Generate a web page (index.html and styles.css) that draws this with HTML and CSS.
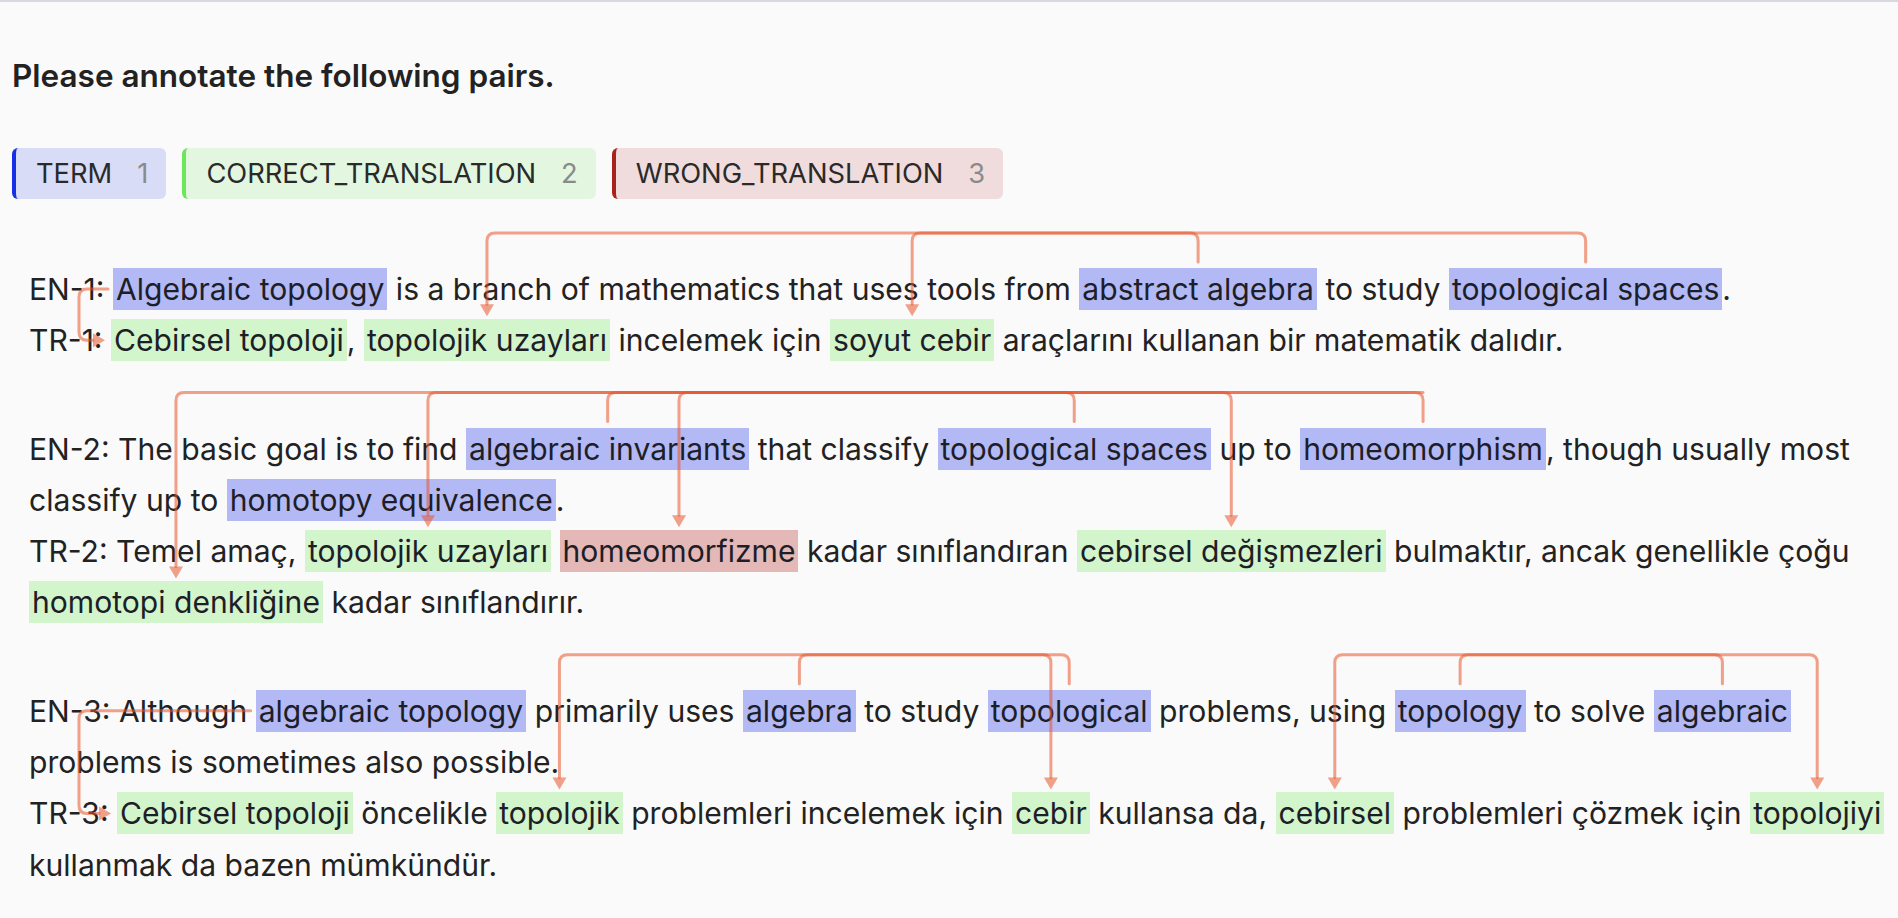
FILE: index.html
```html
<!DOCTYPE html>
<html lang="en">
<head>
<meta charset="utf-8">
<title>Annotate pairs</title>
<link rel="stylesheet" href="styles.css">
</head>
<body>
<main class="page">
  <h1 class="title">Please annotate the following pairs.</h1>
  <div class="labels">
    <span class="chip chip-term"><span class="chip-name">TERM</span><span class="chip-key">1</span></span>
    <span class="chip chip-correct"><span class="chip-name">CORRECT_TRANSLATION</span><span class="chip-key">2</span></span>
    <span class="chip chip-wrong"><span class="chip-name">WRONG_TRANSLATION</span><span class="chip-key">3</span></span>
  </div>

  <section class="pairs" id="pairs">
    <div class="pair">
      <p class="line en">EN-1: <span class="hl term" id="e1a">Algebraic topology</span> is a branch of mathematics that uses tools from <span class="hl term" id="e1b">abstract algebra</span> to study <span class="hl term" id="e1c">topological spaces</span>.</p>
      <p class="line tr">TR-1: <span class="hl correct" id="t1a">Cebirsel topoloji</span>, <span class="hl correct" id="t1c">topolojik uzayları</span> incelemek için <span class="hl correct" id="t1b">soyut cebir</span> araçlarını kullanan bir matematik dalıdır.</p>
    </div>
    <div class="pair">
      <p class="line en">EN-2: The basic goal is to find <span class="hl term" id="e2a">algebraic invariants</span> that classify <span class="hl term" id="e2b">topological spaces</span> up to <span class="hl term" id="e2c">homeomorphism</span>, though usually most classify up to <span class="hl term" id="e2d">homotopy equivalence</span>.</p>
      <p class="line tr">TR-2: Temel amaç, <span class="hl correct" id="t2b">topolojik uzayları</span> <span class="hl wrong" id="t2c">homeomorfizme</span> kadar sınıflandıran <span class="hl correct" id="t2a">cebirsel değişmezleri</span> bulmaktır, ancak genellikle çoğu <span class="hl correct" id="t2d">homotopi denkliğine</span> kadar sınıflandırır.</p>
    </div>
    <div class="pair">
      <p class="line en">EN-3: Although <span class="hl term" id="e3a">algebraic topology</span> primarily uses <span class="hl term" id="e3b">algebra</span> to study <span class="hl term" id="e3c">topological</span> problems, using <span class="hl term" id="e3d">topology</span> to solve <span class="hl term" id="e3e">algebraic</span> problems is sometimes also possible.</p>
      <p class="line tr">TR-3: <span class="hl correct" id="t3a">Cebirsel topoloji</span> öncelikle <span class="hl correct" id="t3c">topolojik</span> problemleri incelemek için <span class="hl correct" id="t3b">cebir</span> kullansa da, <span class="hl correct" id="t3e">cebirsel</span> problemleri çözmek için <span class="hl correct" id="t3d">topolojiyi</span> kullanmak da bazen mümkündür.</p>
    </div>
    <svg class="arrows" id="arrows" xmlns="http://www.w3.org/2000/svg"></svg>
  </section>
</main>
<script src="app.js"></script>
</body>
</html>
```

FILE: styles.css
```css
* { box-sizing: border-box; }

html, body {
  margin: 0;
  padding: 0;
  background: #fafafa;
}

body {
  border-top: 2px solid #d8d8e0;
  font-family: Inter, "Noto Sans", "Liberation Sans", sans-serif;
  color: #222222;
}

.page {
  padding: 0 0 0 12px;
}

.title {
  margin: 56px 0 0;
  font-size: 31.5px;
  line-height: 36px;
  font-weight: 600;
  color: #222222;
}

.labels {
  display: flex;
  gap: 16px;
  margin-top: 54px;
}

.chip {
  display: inline-flex;
  align-items: center;
  gap: 25px;
  height: 51px;
  padding: 0 18px 0 20px;
  border-left: 4px solid;
  border-radius: 6px;
  font-size: 27.3px;
  color: #2a2a2a;
}

.chip-key {
  color: #8a8a8a;
}

.chip-term { background: #d9dcf7; border-left-color: #1530e6; }
.chip-correct { background: #e3f7e0; border-left-color: #6be85a; }
.chip-wrong { background: #f0dcdc; border-left-color: #a8231a; }

.pairs {
  position: relative;
  margin-top: 65px;
  padding-left: 17px;
}

.pair {
  margin-bottom: 57px;
}

.line {
  margin: 0;
  font-size: 30.1px;
  line-height: 51.3px;
  color: #222222;
}

.hl {
  padding: 3px 3px;
  -webkit-box-decoration-break: clone;
  box-decoration-break: clone;
  color: #1e1e28;
}

.term { background: #b3b9f5; }
.correct { background: #d2f5cb; }
.wrong { background: #e4b8b6; }

.arrows {
  position: absolute;
  left: 0;
  top: 0;
  width: 100%;
  height: 100%;
  overflow: visible;
  pointer-events: none;
}
```

FILE: app.js
```js
(function () {
  var links = [
    ['e1a', 't1a', 'left'],
    ['e1b', 't1b'],
    ['e1c', 't1c'],
    ['e2a', 't2a'],
    ['e2b', 't2b'],
    ['e2c', 't2c'],
    ['e2d', 't2d'],
    ['e3a', 't3a', 'left'],
    ['e3b', 't3b'],
    ['e3c', 't3c'],
    ['e3d', 't3d'],
    ['e3e', 't3e']
  ];
  var NS = 'http://www.w3.org/2000/svg';
  var COLOR = 'rgba(232, 85, 44, 0.55)';
  var R = 8;

  function draw() {
    var root = document.getElementById('pairs');
    var svg = document.getElementById('arrows');
    var base = root.getBoundingClientRect();
    svg.innerHTML = '';

    function rel(el) {
      var r = el.getClientRects()[0];
      return {
        left: r.left - base.left,
        right: r.right - base.left,
        top: r.top - base.top,
        bottom: r.bottom - base.top,
        cx: (r.left + r.right) / 2 - base.left,
        cy: (r.top + r.bottom) / 2 - base.top
      };
    }

    function add(tag, attrs) {
      var n = document.createElementNS(NS, tag);
      for (var k in attrs) n.setAttribute(k, attrs[k]);
      svg.appendChild(n);
      return n;
    }

    function enTopOf(el) {
      return el.closest('.pair').querySelector('.en').getBoundingClientRect().top - base.top;
    }

    links.forEach(function (l) {
      var srcEl = document.getElementById(l[0]);
      var tgtEl = document.getElementById(l[1]);
      var enTop = enTopOf(srcEl);
      var s = rel(srcEl);
      var t = rel(tgtEl);
      var d;

      if (l[2] === 'left') {
        var lx = 67;
        var sx = s.left - 5;
        var tipX = t.left - 6;
        d = 'M' + sx + ' ' + s.cy +
          ' H' + (lx + R) +
          ' Q' + lx + ' ' + s.cy + ' ' + lx + ' ' + (s.cy + R) +
          ' V' + (t.cy - R) +
          ' Q' + lx + ' ' + t.cy + ' ' + (lx + R) + ' ' + t.cy +
          ' H' + (tipX - 12);
        add('path', { d: d, fill: 'none', stroke: COLOR, 'stroke-width': 3, 'stroke-linecap': 'round' });
        add('polygon', {
          points: (tipX - 12) + ',' + (t.cy - 7) + ' ' + (tipX - 12) + ',' + (t.cy + 7) + ' ' + tipX + ',' + t.cy,
          fill: COLOR
        });
        return;
      }

      var hy = enTop - 31;
      var tipY = t.top - 3;
      var firstLine = s.top < enTop + 20;

      if (!firstLine) {
        /* source wraps onto a later line: join the pair's shared rail from its far end */
        var pairEl = srcEl.closest('.pair');
        var far = t.cx;
        links.forEach(function (o) {
          var oEl = document.getElementById(o[0]);
          if (o[2] || oEl.closest('.pair') !== pairEl) return;
          var or = rel(oEl);
          if (or.top < enTop + 20) far = Math.max(far, or.cx);
        });
        d = 'M' + far + ' ' + hy +
          ' H' + (t.cx + R) +
          ' Q' + t.cx + ' ' + hy + ' ' + t.cx + ' ' + (hy + R) +
          ' V' + (tipY - 12);
      } else {
        var dir = t.cx < s.cx ? -1 : 1;
        d = 'M' + s.cx + ' ' + (s.top - 6) +
          ' V' + (hy + R) +
          ' Q' + s.cx + ' ' + hy + ' ' + (s.cx + dir * R) + ' ' + hy +
          ' H' + (t.cx - dir * R) +
          ' Q' + t.cx + ' ' + hy + ' ' + t.cx + ' ' + (hy + R) +
          ' V' + (tipY - 12);
      }
      add('path', { d: d, fill: 'none', stroke: COLOR, 'stroke-width': 3, 'stroke-linecap': 'round' });
      add('polygon', {
        points: (t.cx - 7) + ',' + (tipY - 12) + ' ' + (t.cx + 7) + ',' + (tipY - 12) + ' ' + t.cx + ',' + tipY,
        fill: COLOR
      });
    });
  }

  if (document.fonts && document.fonts.ready) {
    document.fonts.ready.then(draw);
  }
  draw();
  window.addEventListener('resize', draw);
})();
```
